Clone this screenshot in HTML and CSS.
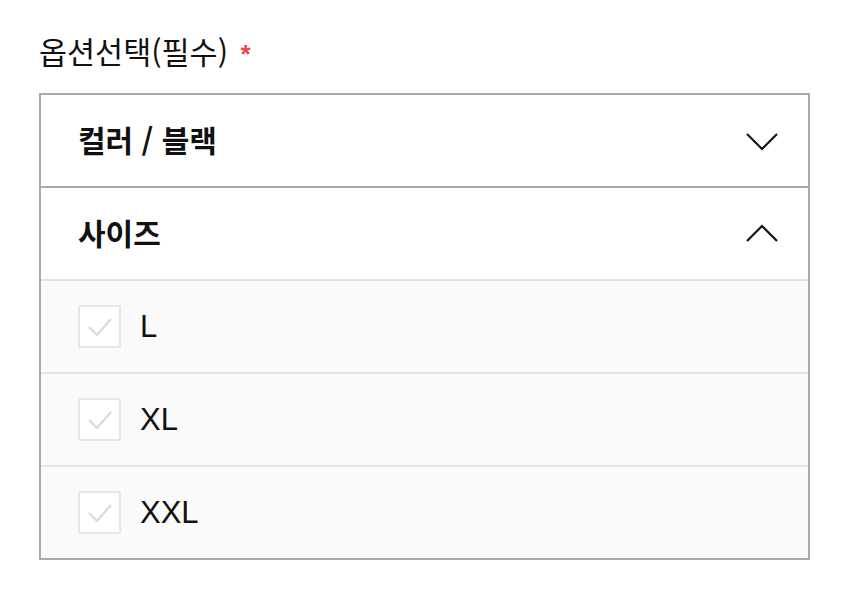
FILE: index.html
```html
<!DOCTYPE html>
<html lang="ko">
<head>
    <meta charset="UTF-8">
    <title>옵션선택</title>
    <link rel="stylesheet" href="styles.css">
</head>
<body>
    <div class="option-select">
        <div class="option-label">옵션선택(필수) <span class="required">*</span></div>

        <div class="option-box">
            <div class="option-head">
                <span class="option-title">컬러 / 블랙</span>
                <svg class="chevron" width="32" height="20" viewBox="0 0 32 20">
                    <polyline points="1,3 16,18 31,3" fill="none" stroke="#111" stroke-width="2.2"/>
                </svg>
            </div>

            <div class="option-head">
                <span class="option-title">사이즈</span>
                <svg class="chevron" width="32" height="20" viewBox="0 0 32 20">
                    <polyline points="1,17 16,2 31,17" fill="none" stroke="#111" stroke-width="2.2"/>
                </svg>
            </div>

            <label class="option-item">
                <span class="check">
                    <svg width="26" height="20" viewBox="0 0 26 20">
                        <polyline points="2,10 10,18 24,2" fill="none" stroke="#d9d9d9" stroke-width="2.2"/>
                    </svg>
                </span>
                <span class="item-name">L</span>
            </label>
            <label class="option-item">
                <span class="check">
                    <svg width="26" height="20" viewBox="0 0 26 20">
                        <polyline points="2,10 10,18 24,2" fill="none" stroke="#d9d9d9" stroke-width="2.2"/>
                    </svg>
                </span>
                <span class="item-name">XL</span>
            </label>
            <label class="option-item">
                <span class="check">
                    <svg width="26" height="20" viewBox="0 0 26 20">
                        <polyline points="2,10 10,18 24,2" fill="none" stroke="#d9d9d9" stroke-width="2.2"/>
                    </svg>
                </span>
                <span class="item-name">XXL</span>
            </label>
        </div>
    </div>
</body>
</html>
```

FILE: styles.css
```css
body {
    margin: 0;
    background-color: white;
    font-family: "Noto Sans CJK KR", "Noto Sans", sans-serif;
    color: #111;
}
.option-select {
    width: 771px;
    padding: 31px 0 0 39px;
}
.option-label {
    font-size: 30.5px;
    line-height: 40px;
    margin-bottom: 19px;
}
.required {
    color: #e84a4a;
    font-family: "Liberation Sans", sans-serif;
    font-weight: bold;
    font-size: 26px;
    vertical-align: 1px;
    margin-left: 4px;
}
.option-box {
    border: 2px solid #aaa;
}
.option-head {
    display: flex;
    align-items: center;
    justify-content: space-between;
    height: 91px;
    padding: 0 30px 0 37px;
    background-color: white;
}
.option-head + .option-head {
    border-top: 2px solid #aaa;
}
.option-title {
    font-size: 30px;
    font-weight: bold;
    margin-top: -4px;
}
.option-item {
    display: flex;
    align-items: center;
    height: 91px;
    padding: 0 37px;
    background-color: #fafafa;
    border-top: 2px solid #e2e2e2;
}
.check {
    display: flex;
    align-items: center;
    justify-content: center;
    width: 39px;
    height: 39px;
    border: 2px solid #e6e6e6;
    border-radius: 2px;
    background-color: white;
    margin-right: 19px;
}
.item-name {
    font-family: "Liberation Sans", sans-serif;
    font-size: 31px;
}
```
